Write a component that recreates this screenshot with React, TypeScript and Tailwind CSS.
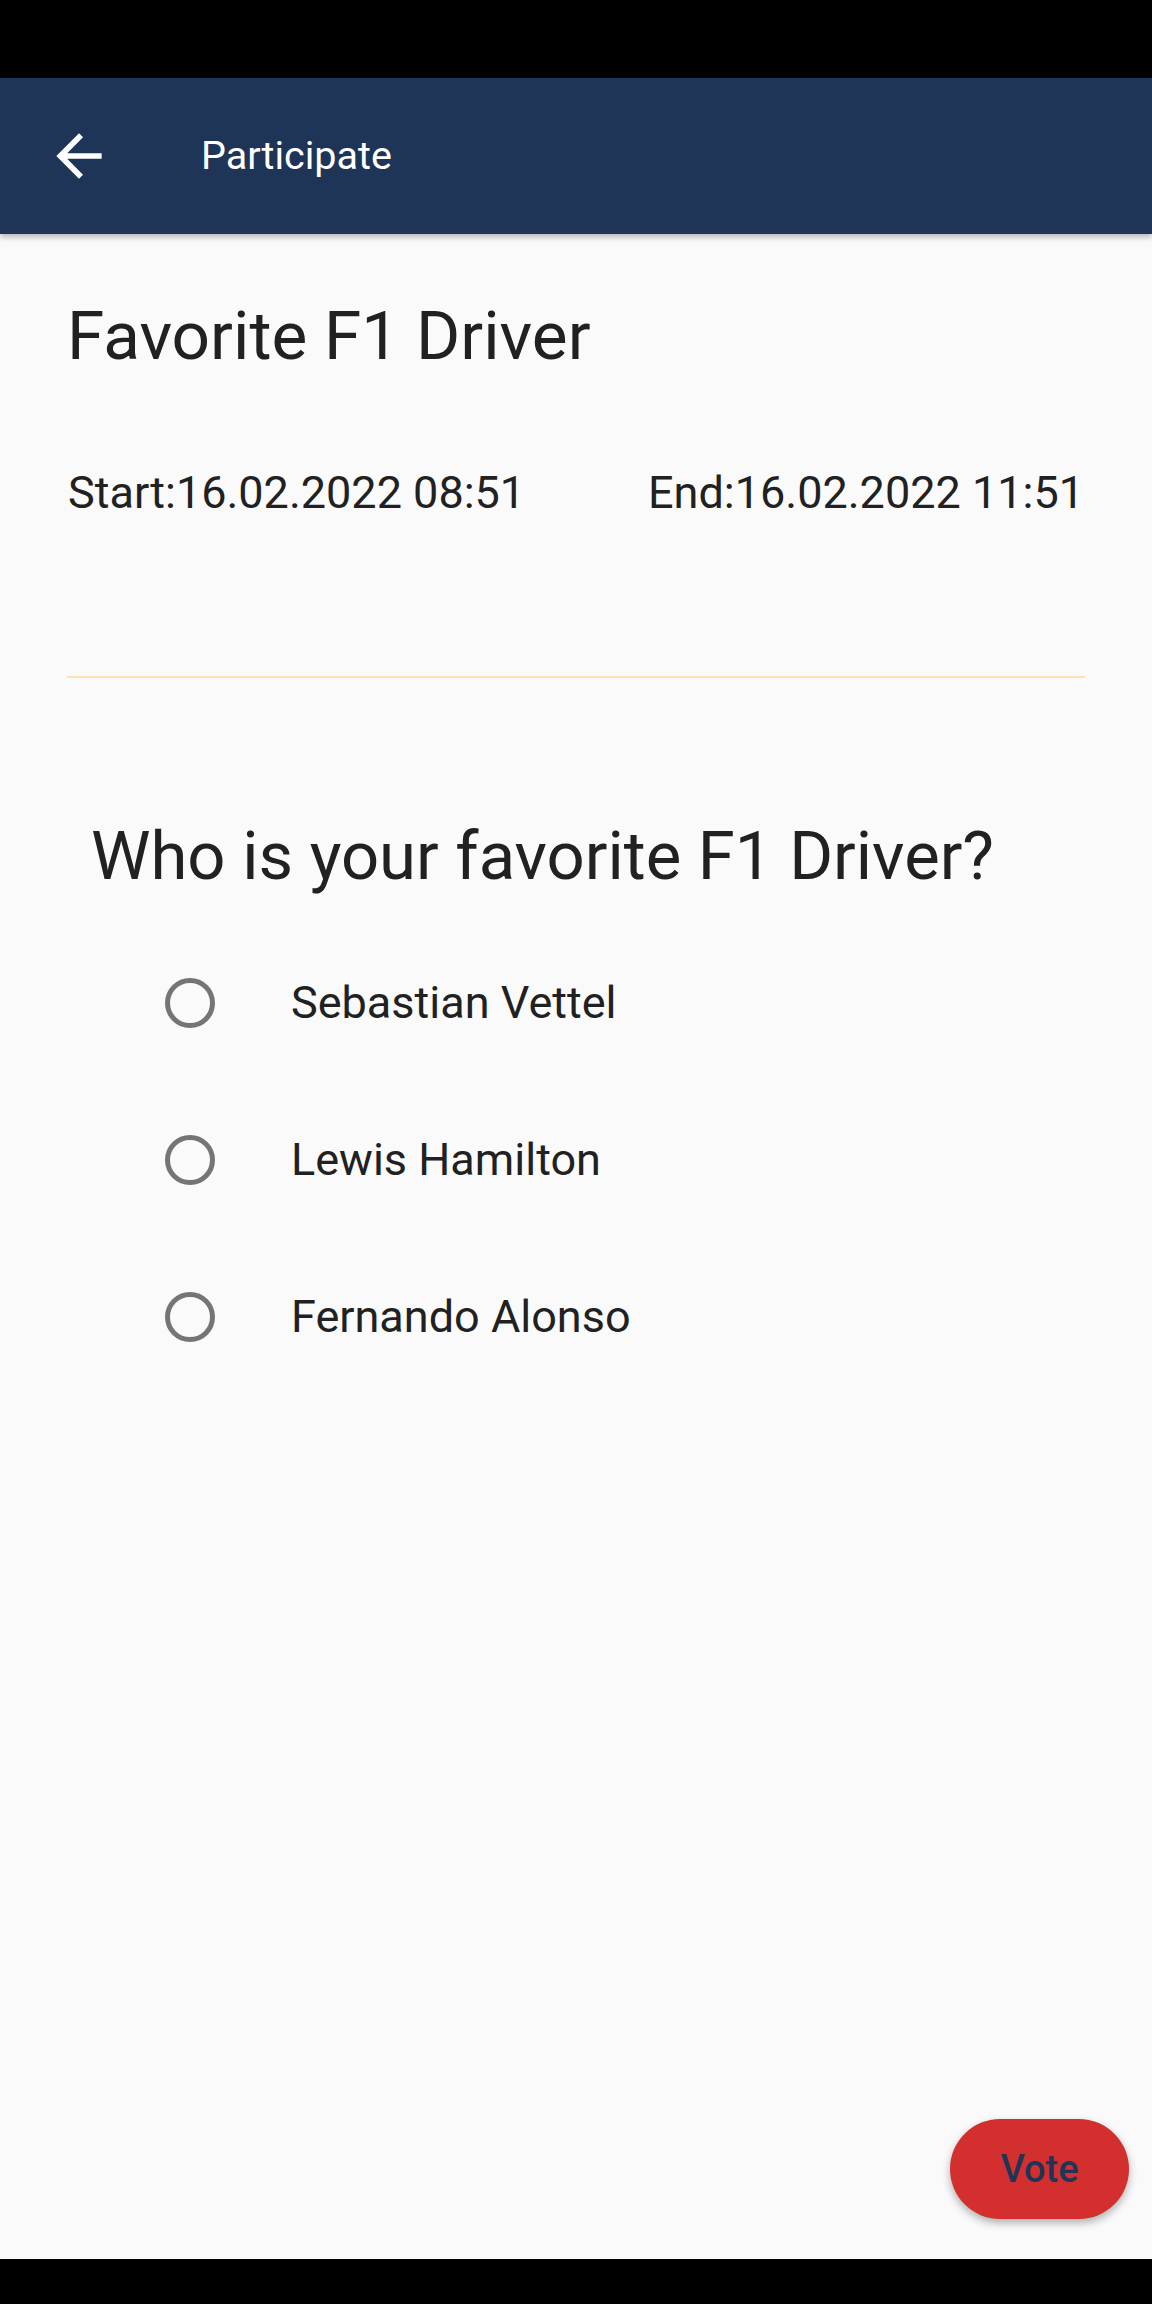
import { useState } from "react";

const drivers = ["Sebastian Vettel", "Lewis Hamilton", "Fernando Alonso"];

export default function App() {
  const [choice, setChoice] = useState<string | null>(null);

  return (
    <div className="flex h-[2304px] flex-col bg-[#fafafa] font-['Roboto',sans-serif] text-[#212121]">
      <div className="h-[78px] bg-black" />

      <header className="relative z-10 flex h-[156px] items-center bg-[#1e3557] shadow-[0_3px_6px_rgba(0,0,0,0.28)]">
        <button className="ml-[45px] h-[68px] w-[68px] text-white">
          <svg viewBox="0 0 24 24" className="h-[68px] w-[68px]" fill="currentColor">
            <path d="M20 11H7.83l5.59-5.59L12 4l-8 8 8 8 1.41-1.41L7.83 13H20v-2z" />
          </svg>
        </button>
        <h1 className="ml-[88px] text-[39.5px] leading-none text-white">Participate</h1>
      </header>

      <main className="flex flex-1 flex-col">
        <h2 className="mt-[62px] pl-[67px] text-[67.5px] leading-[80px]">Favorite F1 Driver</h2>

        <div className="mt-[91px] flex justify-between pl-[68px] pr-[68px] text-[45px] leading-[52px]">
          <span>Start:16.02.2022 08:51</span>
          <span>End:16.02.2022 11:51</span>
        </div>

        <div className="mx-[67px] mt-[157px] h-[2px] bg-[#fde2b3]" />

        <h3 className="mt-[140px] pl-[91px] text-[67px] leading-[76px]">Who is your favorite F1 Driver?</h3>

        <div className="mt-[30px] flex flex-col">
          {drivers.map((d) => (
            <label key={d} className="flex h-[157px] items-center pl-[165px]" onClick={() => setChoice(d)}>
              <span className="flex h-[50px] w-[50px] items-center justify-center rounded-full border-[5px] border-[#757575]">
                {choice === d && <span className="h-[24px] w-[24px] rounded-full bg-[#757575]" />}
              </span>
              <span className="ml-[76px] text-[45px] leading-[52px]">{d}</span>
            </label>
          ))}
        </div>

        <div className="mt-auto flex justify-end pb-[40px] pr-[23px]">
          <button className="h-[100px] w-[179px] rounded-full bg-[#d32f2f] text-[38px] font-medium text-[#1e3557] shadow-[0_4px_8px_rgba(0,0,0,0.3)]">
            Vote
          </button>
        </div>
      </main>

      <div className="h-[45px] bg-black" />
    </div>
  );
}
